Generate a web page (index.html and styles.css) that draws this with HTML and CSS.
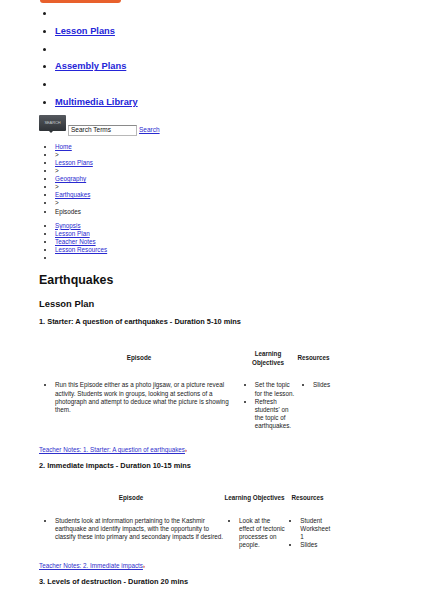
FILE: index.html
```html
<!DOCTYPE html>
<html lang="en">
<head>
<meta charset="utf-8">
<title>Earthquakes - Lesson Plan</title>
<link rel="stylesheet" href="styles.css">
</head>
<body>
<div class="page">
  <div class="topbar"></div>
  <ul class="mainnav">
    <li></li>
    <li><a href="#">Lesson Plans</a></li>
    <li></li>
    <li><a href="#">Assembly Plans</a></li>
    <li></li>
    <li><a href="#">Multimedia Library</a></li>
  </ul>
  <div class="search">
    <div class="search-btn">SEARCH</div>
    <div class="search-input">Search Terms</div>
    <a class="search-link" href="#">Search</a>
  </div>
  <ul class="crumbs">
    <li><a href="#">Home</a></li>
    <li>&gt;</li>
    <li><a href="#">Lesson Plans</a></li>
    <li>&gt;</li>
    <li><a href="#">Geography</a></li>
    <li>&gt;</li>
    <li><a href="#">Earthquakes</a></li>
    <li>&gt;</li>
    <li>Episodes</li>
  </ul>
  <ul class="subnav">
    <li><a href="#">Synopsis</a></li>
    <li><a href="#">Lesson Plan</a></li>
    <li><a href="#">Teacher Notes</a></li>
    <li><a href="#">Lesson Resources</a></li>
    <li></li>
  </ul>
  <h1 class="title">Earthquakes</h1>
  <h2 class="subtitle">Lesson Plan</h2>

  <h3 class="step">1. Starter: A question of earthquakes - Duration 5-10 mins</h3>
  <table class="plan plan-one">
    <thead>
      <tr>
        <th class="c-ep">Episode</th>
        <th class="c-lo">Learning<br>Objectives</th>
        <th class="c-res">Resources</th>
      </tr>
    </thead>
    <tbody>
      <tr>
        <td class="c-ep"><ul><li>Run this Episode either as a photo jigsaw, or a picture reveal activity. Students work in groups, looking at sections of a photograph and attempt to deduce what the picture is showing them.</li></ul></td>
        <td class="c-lo"><ul><li>Set the topic for the lesson.</li><li>Refresh<br>students' on<br>the topic of<br>earthquakes.</li></ul></td>
        <td class="c-res"><ul><li>Slides</li></ul></td>
      </tr>
    </tbody>
  </table>
  <p class="notes"><a href="#">Teacher Notes: 1. Starter: A question of earthquakes</a><span class="arrow">›</span></p>

  <h3 class="step">2. Immediate impacts - Duration 10-15 mins</h3>
  <table class="plan plan-two">
    <thead>
      <tr>
        <th class="c-ep">Episode</th>
        <th class="c-lo">Learning Objectives</th>
        <th class="c-res">Resources</th>
      </tr>
    </thead>
    <tbody>
      <tr>
        <td class="c-ep"><ul><li>Students look at information pertaining to the Kashmir earthquake and identify impacts, with the opportunity to classify these into primary and secondary impacts if desired.</li></ul></td>
        <td class="c-lo"><ul><li>Look at the effect of tectonic processes on people.</li></ul></td>
        <td class="c-res"><ul><li>Student Worksheet 1</li><li>Slides</li></ul></td>
      </tr>
    </tbody>
  </table>
  <p class="notes"><a href="#">Teacher Notes: 2. Immediate impacts</a><span class="arrow">›</span></p>

  <h3 class="step">3. Levels of destruction - Duration 20 mins</h3>
</div>
</body>
</html>
```
FILE: styles.css
```css
html, body {
  margin: 0;
  padding: 0;
  background: #ffffff;
}
body {
  font-family: "Liberation Sans", Arial, Helvetica, sans-serif;
  color: #1a1a1a;
  font-size: 6.3px;
}
a {
  color: #2a2ad0;
  text-decoration: underline;
}
.page {
  padding-left: 39px;
  width: 340px;
}
.topbar {
  width: 81px;
  height: 3px;
  margin-left: 1px;
  background: #e8602c;
  border-radius: 0 0 3px 3px;
}
.mainnav {
  margin: 2px 0 0;
  padding-left: 16px;
}
.mainnav li {
  height: 17.8px;
  line-height: 17.8px;
  font-size: 9.3px;
  font-weight: bold;
}
.mainnav a {
  color: #2424d8;
}
.search {
  display: flex;
  align-items: flex-start;
  margin-top: 3px;
  height: 21px;
}
.search-btn {
  position: relative;
  width: 27px;
  height: 16px;
  background: linear-gradient(#55595e, #2f3337);
  color: #c8ccd0;
  font-size: 4px;
  line-height: 16px;
  text-align: center;
  letter-spacing: -0.1px;
  border-radius: 1px;
}
.search-btn::after {
  content: "";
  position: absolute;
  left: 10px;
  bottom: -2px;
  border-left: 2px solid transparent;
  border-right: 2px solid transparent;
  border-top: 2px solid #2f3337;
}
.search-input {
  box-sizing: border-box;
  width: 69px;
  height: 10.5px;
  margin: 10.5px 0 0 2px;
  border: 1px solid #b8b8b8;
  border-top-color: #8a8a8a;
  padding: 0 2px;
  font-size: 6.5px;
  line-height: 8.5px;
  color: #111;
}
.search-link {
  margin: 11px 0 0 2px;
  font-size: 6.5px;
  line-height: 8.5px;
}
.crumbs, .subnav {
  margin: 0;
  padding-left: 16px;
  line-height: 8.1px;
}
.crumbs {
  margin-top: 7px;
}
.subnav {
  margin-top: 6px;
  min-height: 40.5px;
}
.subnav li {
  height: 8.1px;
}
.title {
  margin: 11px 0 0;
  font-size: 12.4px;
  line-height: 15px;
  color: #111;
}
.subtitle {
  margin: 10px 0 0;
  font-size: 9.4px;
  line-height: 12px;
  color: #111;
}
.step {
  margin: 7px 0 0;
  font-size: 7.4px;
  line-height: 10px;
  color: #111;
}
.plan {
  table-layout: fixed;
  border-collapse: collapse;
  margin-top: 16px;
}
.plan th {
  padding: 7px 0;
  font-weight: bold;
  text-align: center;
  line-height: 8.6px;
  vertical-align: middle;
}
.plan td {
  padding: 7px 0;
  vertical-align: top;
  line-height: 8.2px;
}
.plan ul {
  margin: 0;
  padding-left: 16px;
}
.plan-one { width: 291px; }
.plan-one .c-ep { width: 200px; }
.plan-one .c-lo { width: 58px; }
.plan-one .c-res { width: 33px; }
.plan-one td { padding-bottom: 8.5px; }
.plan-one td.c-lo ul { padding-left: 15.7px; }
.plan-one td.c-res ul { padding-left: 16px; }

.plan-two { width: 290px; }
.plan-two .c-ep { width: 184px; }
.plan-two .c-lo { width: 63px; }
.plan-two .c-res { width: 43px; }
.plan-two td { padding-bottom: 5.5px; }
.plan-two td.c-lo ul { padding-left: 16px; }
.plan-two td.c-res ul { padding-left: 14.3px; }

.notes {
  margin: 7px 0 0;
  line-height: 8.2px;
}
.notes a {
  color: #3030cc;
}
.arrow {
  color: #d42020;
  font-weight: bold;
  font-size: 6px;
}
```
